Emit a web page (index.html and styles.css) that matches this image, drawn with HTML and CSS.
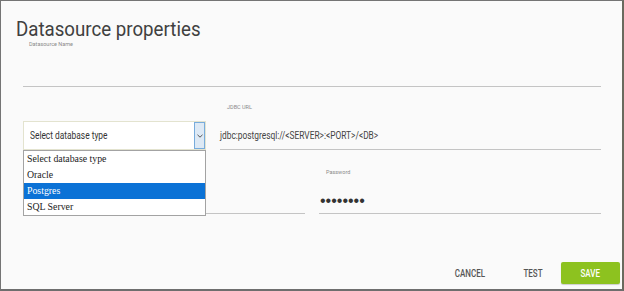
FILE: index.html
```html
<!DOCTYPE html>
<html>
<head>
<meta charset="utf-8">
<link rel="stylesheet" href="styles.css">
</head>
<body>
<div class="frame">
  <header class="header">
    <h1 class="title"><span class="sx sx-title">Datasource properties</span></h1>
  </header>
  <div class="form">
    <div class="field">
      <label class="label">Datasource Name</label>
      <div class="input input-name"></div>
    </div>
    <div class="row row-2">
      <div class="select-wrap">
        <div class="select">
          <span class="sx sx-input">Select database type</span>
          <span class="select-btn">
            <svg width="6" height="4" viewBox="0 0 6 4"><polyline points="0.5,0.8 3,3.2 5.5,0.8" fill="none" stroke="#555" stroke-width="1"/></svg>
          </span>
        </div>
        <ul class="dropdown">
          <li class="opt">Select database type</li>
          <li class="opt">Oracle</li>
          <li class="opt opt-active">Postgres</li>
          <li class="opt">SQL Server</li>
        </ul>
      </div>
      <div class="field field-jdbc">
        <label class="label label-jdbc">JDBC URL</label>
        <div class="input input-jdbc"><span class="sx sx-input">jdbc:postgresql://&lt;SERVER&gt;:&lt;PORT&gt;/&lt;DB&gt;</span></div>
      </div>
    </div>
    <div class="row row-3">
      <div class="field field-half">
        <label class="label label-r3">&nbsp;</label>
        <div class="input input-r3"></div>
      </div>
      <div class="field field-half">
        <label class="label label-r3">Password</label>
        <div class="input input-r3"><span class="dots">••••••••</span></div>
      </div>
    </div>
  </div>
  <footer class="footer">
    <button class="btn btn-cancel"><span class="sx sx-btn">CANCEL</span></button>
    <button class="btn btn-test"><span class="sx sx-btn">TEST</span></button>
    <button class="btn btn-save"><span class="sx sx-btn">SAVE</span></button>
  </footer>
</div>
</body>
</html>
```
FILE: styles.css
```css
* { box-sizing: border-box; }
html, body { margin: 0; padding: 0; }
body { width: 624px; height: 291px; overflow: hidden; background: #fafafa; font-family: Roboto, "Liberation Sans", sans-serif; }

.frame {
  width: 624px;
  height: 291px;
  background: #fafafa;
  border: 1px solid #747474;
  border-right: 2px solid #6a6a5e;
  border-bottom: 2px solid #6e6e6e;
  position: relative;
}

.sx { display: inline-block; white-space: nowrap; transform-origin: left center; }
.sx-title { transform: scaleX(0.89); }
.sx-input { transform: scaleX(0.76); }
.sx-btn { transform: scaleX(0.8); transform-origin: center center; }

.header { padding: 16px 0 0 15px; }
.title {
  margin: 0;
  font-size: 21px;
  line-height: 24px;
  font-weight: 400;
  color: #404040;
}

.form { width: 578px; margin-left: 22px; }

.field { display: flex; flex-direction: column; }
.label {
  font-size: 5.5px;
  line-height: 6px;
  color: #8a8a8a;
  padding-left: 6px;
  white-space: nowrap;
}
.input {
  border-bottom: 1px solid #c4c4c4;
  font-size: 11px;
  color: #444;
}
.input-name { height: 40px; }

.row { display: flex; gap: 14px; align-items: flex-end; }

.field-jdbc { flex: 1; }
.label-jdbc { margin-top: 17px; padding-left: 7px; }
.input-jdbc { height: 40px; padding-top: 18px; line-height: 16px; }

.select-wrap { width: 183px; position: relative; }
.select {
  height: 29px;
  background: #fff;
  border: 1px solid #e3e3cf;
  display: flex;
  align-items: center;
  padding-left: 6px;
  font-size: 11px;
  color: #333;
  position: relative;
}
.select .sx-input { flex: 1; }
.select-btn {
  position: absolute;
  right: 0;
  top: 0;
  width: 11px;
  height: 27px;
  background: #dde9f5;
  border: 1px solid #78acdc;
  display: flex;
  align-items: center;
  justify-content: center;
}

.dropdown {
  position: absolute;
  left: 0;
  top: 100%;
  width: 183px;
  margin: 0;
  padding: 0;
  list-style: none;
  background: #fff;
  border: 1px solid #a3a3a3;
  z-index: 2;
  font-family: "Liberation Serif", serif;
  font-size: 9.8px;
  color: #222;
}
.opt { height: 16px; line-height: 16px; padding-left: 3px; }
.opt-active { background: #0b72d6; color: #fff; }

.row-3 .field-half { width: 282px; }
.label-r3 { margin-top: 19px; padding-left: 7px; }
.input-r3 { height: 39px; padding-top: 18px; line-height: 16px; }
.dots {
  font-family: "Liberation Sans", sans-serif;
  font-size: 16px;
  color: #333;
  padding-left: 1px;
}

.footer {
  display: flex;
  justify-content: flex-end;
  gap: 4px;
  margin-top: 48px;
  padding-right: 2px;
}
.btn {
  height: 22px;
  border: 0;
  background: transparent;
  font-family: Roboto, sans-serif;
  font-weight: 500;
  font-size: 10px;
  color: #555;
  padding: 0;
  display: flex;
  align-items: center;
  justify-content: center;
}
.btn-cancel { width: 70px; }
.btn-test { width: 48px; }
.btn-save {
  width: 59px;
  background: #8dc21f;
  color: #fff;
  border-radius: 2px;
  box-shadow: 0 1px 1px rgba(0,0,0,0.18);
}
```
